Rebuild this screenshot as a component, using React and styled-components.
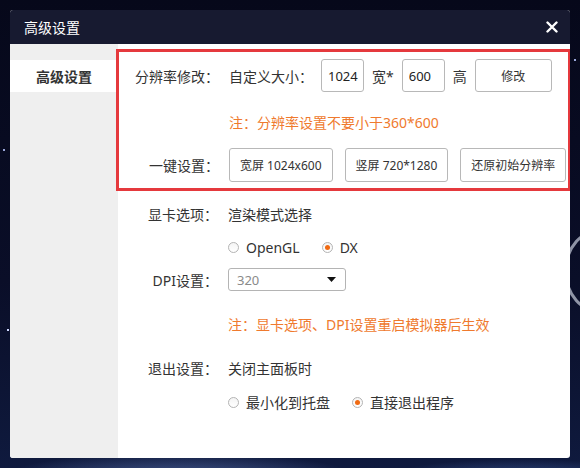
import { useState } from "react";
import styled, { createGlobalStyle } from "styled-components";

const GlobalStyle = createGlobalStyle`
  html, body {
    margin: 0;
    padding: 0;
  }

  body {
    font-family: "Noto Sans", "Noto Sans CJK SC", "Microsoft YaHei", sans-serif;
    background: #070a1c;
  }
`;

const Desktop = styled.div`
  position: relative;
  width: 580px;
  height: 468px;
  overflow: hidden;
  padding: 10px 0 0 10px;
  box-sizing: border-box;
  background:
    radial-gradient(ellipse 260px 40px at 180px 480px, rgba(120, 150, 220, 0.55), transparent 70%),
    radial-gradient(ellipse 200px 30px at 520px 480px, rgba(90, 130, 210, 0.5), transparent 70%),
    radial-gradient(circle 1px at 8px 330px, #cfd8ff 100%, transparent),
    radial-gradient(circle 1px at 4px 150px, #9aa6d8 100%, transparent),
    radial-gradient(circle 1px at 575px 60px, #9aa6d8 100%, transparent),
    linear-gradient(180deg, #06081a 0%, #0a0e28 60%, #0f1a3e 100%);
`;

// ring of the planet peeking out at the right edge
const Ring = styled.div`
  position: absolute;
  right: -60px;
  top: 228px;
  width: 70px;
  height: 80px;
  border: 3px solid rgba(200, 205, 220, 0.7);
  border-radius: 50%;
`;

const Dialog = styled.div`
  position: relative;
  width: 560px;
  height: 448px;
  display: flex;
  flex-direction: column;
  border-radius: 3px;
  overflow: hidden;
  background: #fff;
`;

const Header = styled.div`
  height: 34px;
  flex: none;
  display: flex;
  align-items: center;
  justify-content: space-between;
  padding: 0 8px 0 14px;
  background: #171a30;
  color: #fff;
  font-size: 14px;
`;

const CloseButton = styled.button`
  width: 20px;
  height: 20px;
  padding: 0;
  border: none;
  background: none;
  display: flex;
  align-items: center;
  justify-content: center;
  cursor: pointer;
`;

const Body = styled.div`
  flex: 1;
  display: flex;
  min-height: 0;
`;

const Sidebar = styled.div`
  width: 108px;
  flex: none;
  background: #efefef;
  padding-top: 16px;
`;

const Tab = styled.div`
  height: 32px;
  display: flex;
  align-items: center;
  justify-content: center;
  font-size: 14px;
  font-weight: bold;
  color: #333;
  background: ${({ $active }) => ($active ? "#fff" : "transparent")};
`;

const Content = styled.div`
  flex: 1;
  display: flex;
  flex-direction: column;
  font-size: 14px;
  color: #333;
`;

const Highlight = styled.div`
  margin: 5px -1px 0 -2px;
  border: 3px solid #e5393d;
  padding: 7px 0 6px;
`;

const Row = styled.div`
  display: flex;
  align-items: center;
  gap: 8px;
  margin-top: ${({ $top = 0 }) => $top}px;
  min-height: 20px;
`;

const Label = styled.span`
  width: 100px;
  flex: none;
  text-align: right;
  margin-right: 2px;
  white-space: nowrap;
`;

const Indent = styled.span`
  width: 100px;
  flex: none;
  margin-right: 2px;
`;

const Text = styled.span`
  white-space: nowrap;
`;

const Note = styled.span`
  color: #ef7a2e;
  font-size: 14px;
  white-space: nowrap;
`;

const SizeInput = styled.input`
  width: 43px;
  height: 33px;
  box-sizing: border-box;
  border: 1px solid #b8b8b8;
  border-radius: 3px;
  padding: 0 0 0 6px;
  font: inherit;
  font-size: 13px;
  color: #222;
  outline: none;
`;

const Button = styled.button`
  height: ${({ $h = 34 }) => $h}px;
  min-width: ${({ $w = 0 }) => $w}px;
  box-sizing: border-box;
  padding: 0 10px;
  border: 1px solid #b8b8b8;
  border-radius: 3px;
  background: #fff;
  font-family: inherit;
  font-size: 12px;
  color: #333;
  white-space: nowrap;
  cursor: pointer;
`;

const ButtonGroup = styled.div`
  display: flex;
  gap: 12px;
`;

const RadioGroup = styled.div`
  display: flex;
  align-items: center;
  gap: 22px;
`;

const RadioOption = styled.label`
  display: flex;
  align-items: center;
  gap: 7px;
  cursor: pointer;
  white-space: nowrap;
`;

const RadioDot = styled.span`
  width: 11px;
  height: 11px;
  box-sizing: border-box;
  border-radius: 50%;
  border: 1px solid #b4b4b4;
  background: linear-gradient(180deg, #f4f4f4, #fff);
  display: flex;
  align-items: center;
  justify-content: center;

  &::after {
    content: "";
    width: 5px;
    height: 5px;
    border-radius: 50%;
    background: ${({ $checked }) => ($checked ? "#f06a12" : "transparent")};
  }
`;

const Select = styled.div`
  width: 118px;
  height: 23px;
  box-sizing: border-box;
  border: 1px solid #b4b4b4;
  border-radius: 3px;
  display: flex;
  align-items: center;
  justify-content: space-between;
  padding: 0 9px 0 8px;
  font-size: 13px;
  color: #8a8a8a;
`;

function Radio({ checked, onSelect, children }) {
  return (
    <RadioOption onClick={onSelect}>
      <RadioDot $checked={checked} />
      {children}
    </RadioOption>
  );
}

export default function App() {
  const [width, setWidth] = useState("1024");
  const [height, setHeight] = useState("600");
  const [renderMode, setRenderMode] = useState("dx");
  const [exitMode, setExitMode] = useState("quit");

  return (
    <>
      <GlobalStyle />
      <Desktop>
        <Ring />
        <Dialog>
          <Header>
            高级设置
            <CloseButton aria-label="关闭">
              <svg width="12" height="12" viewBox="0 0 12 12">
                <path d="M1.5 1.5 L10.5 10.5 M10.5 1.5 L1.5 10.5" stroke="#fff" strokeWidth="2.4" strokeLinecap="round" />
              </svg>
            </CloseButton>
          </Header>
          <Body>
            <Sidebar>
              <Tab $active>高级设置</Tab>
            </Sidebar>
            <Content>
              <Highlight>
                <Row>
                  <Label>分辨率修改：</Label>
                  <Text>自定义大小：</Text>
                  <SizeInput value={width} onChange={(e) => setWidth(e.target.value)} />
                  <Text>宽*</Text>
                  <SizeInput value={height} onChange={(e) => setHeight(e.target.value)} />
                  <Text>高</Text>
                  <Button $h={33} $w={77}>修改</Button>
                </Row>
                <Row $top={20}>
                  <Indent />
                  <Note>注：分辨率设置不要小于360*600</Note>
                </Row>
                <Row $top={16}>
                  <Label>一键设置：</Label>
                  <ButtonGroup>
                    <Button>宽屏 1024x600</Button>
                    <Button>竖屏 720*1280</Button>
                    <Button>还原初始分辨率</Button>
                  </ButtonGroup>
                </Row>
              </Highlight>

              <Row $top={13}>
                <Label>显卡选项：</Label>
                <Text>渲染模式选择</Text>
              </Row>
              <Row $top={13}>
                <Indent />
                <RadioGroup>
                  <Radio checked={renderMode === "gl"} onSelect={() => setRenderMode("gl")}>OpenGL</Radio>
                  <Radio checked={renderMode === "dx"} onSelect={() => setRenderMode("dx")}>DX</Radio>
                </RadioGroup>
              </Row>
              <Row $top={11}>
                <Label>DPI设置：</Label>
                <Select>
                  320
                  <svg width="9" height="5" viewBox="0 0 9 5">
                    <path d="M0 0 H9 L4.5 5 Z" fill="#111" />
                  </svg>
                </Select>
              </Row>
              <Row $top={23}>
                <Indent />
                <Note>注：显卡选项、DPI设置重启模拟器后生效</Note>
              </Row>
              <Row $top={24}>
                <Label>退出设置：</Label>
                <Text>关闭主面板时</Text>
              </Row>
              <Row $top={14}>
                <Indent />
                <RadioGroup>
                  <Radio checked={exitMode === "tray"} onSelect={() => setExitMode("tray")}>最小化到托盘</Radio>
                  <Radio checked={exitMode === "quit"} onSelect={() => setExitMode("quit")}>直接退出程序</Radio>
                </RadioGroup>
              </Row>
            </Content>
          </Body>
        </Dialog>
      </Desktop>
    </>
  );
}
